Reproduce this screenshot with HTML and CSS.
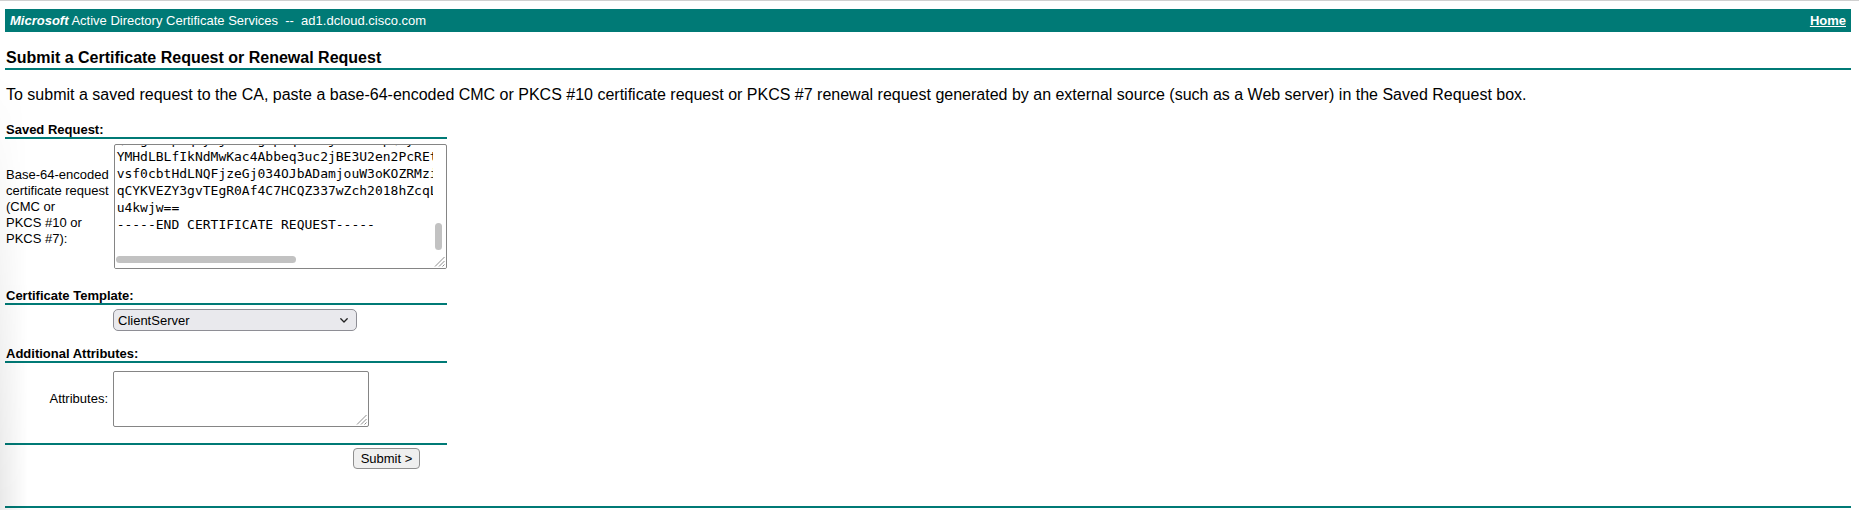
FILE: index.html
```html
<!DOCTYPE html>
<html lang="en">
<head>
<meta charset="utf-8">
<title>Microsoft Active Directory Certificate Services</title>
<link rel="stylesheet" href="styles.css">
</head>
<body>
<div class="topline"></div>
<div class="page">
  <div class="header">
    <div class="brand"><b><i>Microsoft</i></b> Active Directory Certificate Services &nbsp;--&nbsp; ad1.dcloud.cisco.com</div>
    <a class="home" href="#">Home</a>
  </div>

  <div class="title">Submit a Certificate Request or Renewal Request</div>
  <div class="rule"></div>

  <p class="info">To submit a saved request to the CA, paste a base-64-encoded CMC or PKCS #10 certificate request or PKCS #7 renewal request generated by an external source (such as a Web server) in the Saved Request box.</p>

  <form class="form" action="#">
    <div class="sec sec-first">Saved Request:</div>
    <div class="sec-rule"></div>
    <div class="row row-req">
      <div class="label">Base-64-encoded<br>certificate request<br>(CMC or<br>PKCS #10 or<br>PKCS #7):</div>
      <div class="ta ta-req">
        <div class="ta-view">
<pre class="ta-text">Qm9gZnKpLq2yTjR8dHg1pWqzYx0jVbN3cGpQ4yTsHr7kLjPq5gYw2NpjQ8xRzY0t
YMHdLBLfIkNdMwKac4Abbeq3uc2jBE3U2en2PcREtX9kQm1vHa7pLs0dWz3yNf8u
vsf0cbtHdLNQFjzeGj034OJbADamjouW3oKOZRMzi7QwLp2sVb9nDf4hKx1mRt6e
qCYKVEZY3gvTEgR0Af4C7HCQZ337wZch2018hZcqL5sNv8bWm3Jt0pQz7xKd1yFg
u4kwjw==
-----END CERTIFICATE REQUEST-----
</pre>
        </div>
        <div class="track-v"><span class="thumb-v"></span></div>
        <div class="track-h"><span class="thumb-h"></span></div>
        <svg class="grip grip-req" width="15" height="15" viewBox="0 0 15 15">
          <path d="M4 13.5 L13.5 4 M8 13.5 L13.5 8 M11.5 13.5 L13.5 11.5" stroke="#8c8c8c" stroke-width="1" fill="none"/>
        </svg>
      </div>
    </div>

    <div class="sec sec-tpl">Certificate Template:</div>
    <div class="sec-rule"></div>
    <div class="row row-tpl">
      <div class="label"></div>
      <div class="select-wrap">
        <select class="select" name="CertTemplate">
          <option>ClientServer</option>
        </select>
        <svg class="chev" width="8" height="5" viewBox="0 0 8 5">
          <path d="M0.8 0.8 L4 4 L7.2 0.8" stroke="#222" stroke-width="1.3" fill="none" stroke-linecap="round" stroke-linejoin="round"/>
        </svg>
      </div>
    </div>

    <div class="sec sec-attr">Additional Attributes:</div>
    <div class="sec-rule"></div>
    <div class="row row-attr">
      <div class="label label-right">Attributes:</div>
      <div class="ta ta-attr">
        <svg class="grip grip-attr" width="15" height="15" viewBox="0 0 15 15">
          <path d="M4 13.5 L13.5 4 M8 13.5 L13.5 8 M11.5 13.5 L13.5 11.5" stroke="#8c8c8c" stroke-width="1" fill="none"/>
        </svg>
      </div>
    </div>

    <div class="sec-rule rule-end"></div>
    <div class="submit-row">
      <button class="btn" type="button">Submit &gt;</button>
    </div>
  </form>

  <div class="rule rule-bottom"></div>
</div>
<div class="shade"></div>
</body>
</html>
```
FILE: styles.css
```css
* { box-sizing: border-box; }

html, body {
  margin: 0;
  padding: 0;
  background: #ffffff;
}

body {
  font-family: "Liberation Sans", Arial, Helvetica, sans-serif;
  color: #000;
  min-height: 510px;
}

.topline {
  height: 1px;
  background: #d0d0d0;
}

.page {
  padding: 8px 8px 0 5px;
}

.header {
  display: flex;
  justify-content: space-between;
  align-items: center;
  height: 23px;
  padding: 0 5px;
  background: #007a76;
  color: #fff;
  font-size: 13px;
  line-height: 15px;
}

.brand { white-space: nowrap; }

.home {
  color: #fff;
  font-weight: bold;
  text-decoration: underline;
}

.title {
  margin-top: 17px;
  padding-left: 1px;
  font-size: 16px;
  font-weight: bold;
  line-height: 18px;
}

.rule {
  height: 2px;
  margin-top: 1px;
  background: #007a76;
}

.info {
  margin: 16px 0 0;
  padding-left: 1px;
  font-size: 16px;
  line-height: 18px;
}

.form {
  width: 442px;
  margin-top: 19px;
}

.sec {
  padding-left: 1px;
  font-size: 13px;
  font-weight: bold;
  line-height: 14px;
}

.sec-tpl { margin-top: 20px; }
.sec-attr { margin-top: 16px; }

.sec-rule {
  height: 2px;
  background: #007a76;
}

.rule-end { margin-top: 16px; }

.row {
  display: flex;
  align-items: center;
}

.row-req { margin-top: 5px; }
.row-tpl { margin-top: 4px; }
.row-attr { margin-top: 8px; }

.label {
  flex: 0 0 103px;
  margin-right: 5px;
  padding-left: 1px;
  font-size: 13px;
  line-height: 16px;
  white-space: nowrap;
}

.label-right {
  padding-left: 0;
  text-align: right;
}

.ta {
  position: relative;
  overflow: hidden;
  border: 1px solid #858585;
  border-radius: 2px;
  background: #fff;
}

.ta-req {
  width: 335px;
  height: 125px;
}

.ta-attr {
  width: 256px;
  height: 56px;
}

.ta-view {
  position: absolute;
  left: 0;
  top: 0;
  right: 13px;
  bottom: 15px;
  overflow: hidden;
  padding: 0 2px;
}

.ta-text {
  margin: -14px 0 0;
  font-family: "DejaVu Sans Mono", "Liberation Mono", monospace;
  font-size: 13px;
  line-height: 17px;
  white-space: pre;
  color: #000;
}

.track-v {
  position: absolute;
  right: 0;
  top: 0;
  bottom: 15px;
  width: 13px;
}

.track-h {
  position: absolute;
  left: 0;
  right: 15px;
  bottom: 0;
  height: 15px;
  background: #fff;
}

.thumb-v {
  position: absolute;
  left: 2px;
  bottom: 3px;
  width: 7px;
  height: 27px;
  border-radius: 4px;
  background: #c2c2c2;
}

.thumb-h {
  position: absolute;
  left: 1px;
  top: 3px;
  width: 180px;
  height: 7px;
  border-radius: 4px;
  background: #c2c2c2;
}

.grip {
  position: absolute;
  right: 0;
  bottom: 0;
}

.grip-req { background: #fff; }

.select-wrap {
  position: relative;
  width: 244px;
  height: 22px;
}

.select {
  -webkit-appearance: none;
  appearance: none;
  width: 100%;
  height: 100%;
  margin: 0;
  padding: 0 0 0 4px;
  border: 1px solid #8e8e95;
  border-radius: 5px;
  background: #e9e9ed;
  color: #000;
  font-family: "Liberation Sans", Arial, sans-serif;
  font-size: 13px;
}

.chev {
  position: absolute;
  right: 9px;
  top: 9px;
}

.submit-row {
  display: flex;
  justify-content: flex-end;
  margin-top: 3px;
  padding-right: 27px;
}

.btn {
  width: 67px;
  height: 21px;
  padding: 0;
  border: 1px solid #8f8f8f;
  border-radius: 4px;
  background: #efefef;
  color: #000;
  font-family: "Liberation Sans", Arial, sans-serif;
  font-size: 13px;
}

.rule-bottom {
  margin-top: 37px;
}

.shade {
  position: fixed;
  left: 0;
  top: 0;
  width: 28px;
  height: 100%;
  pointer-events: none;
  background: linear-gradient(to right, rgba(0, 0, 0, 0.085), rgba(0, 0, 0, 0));
  -webkit-mask-image: linear-gradient(to bottom, transparent 70px, #000 500px);
  mask-image: linear-gradient(to bottom, transparent 70px, #000 500px);
}
```
